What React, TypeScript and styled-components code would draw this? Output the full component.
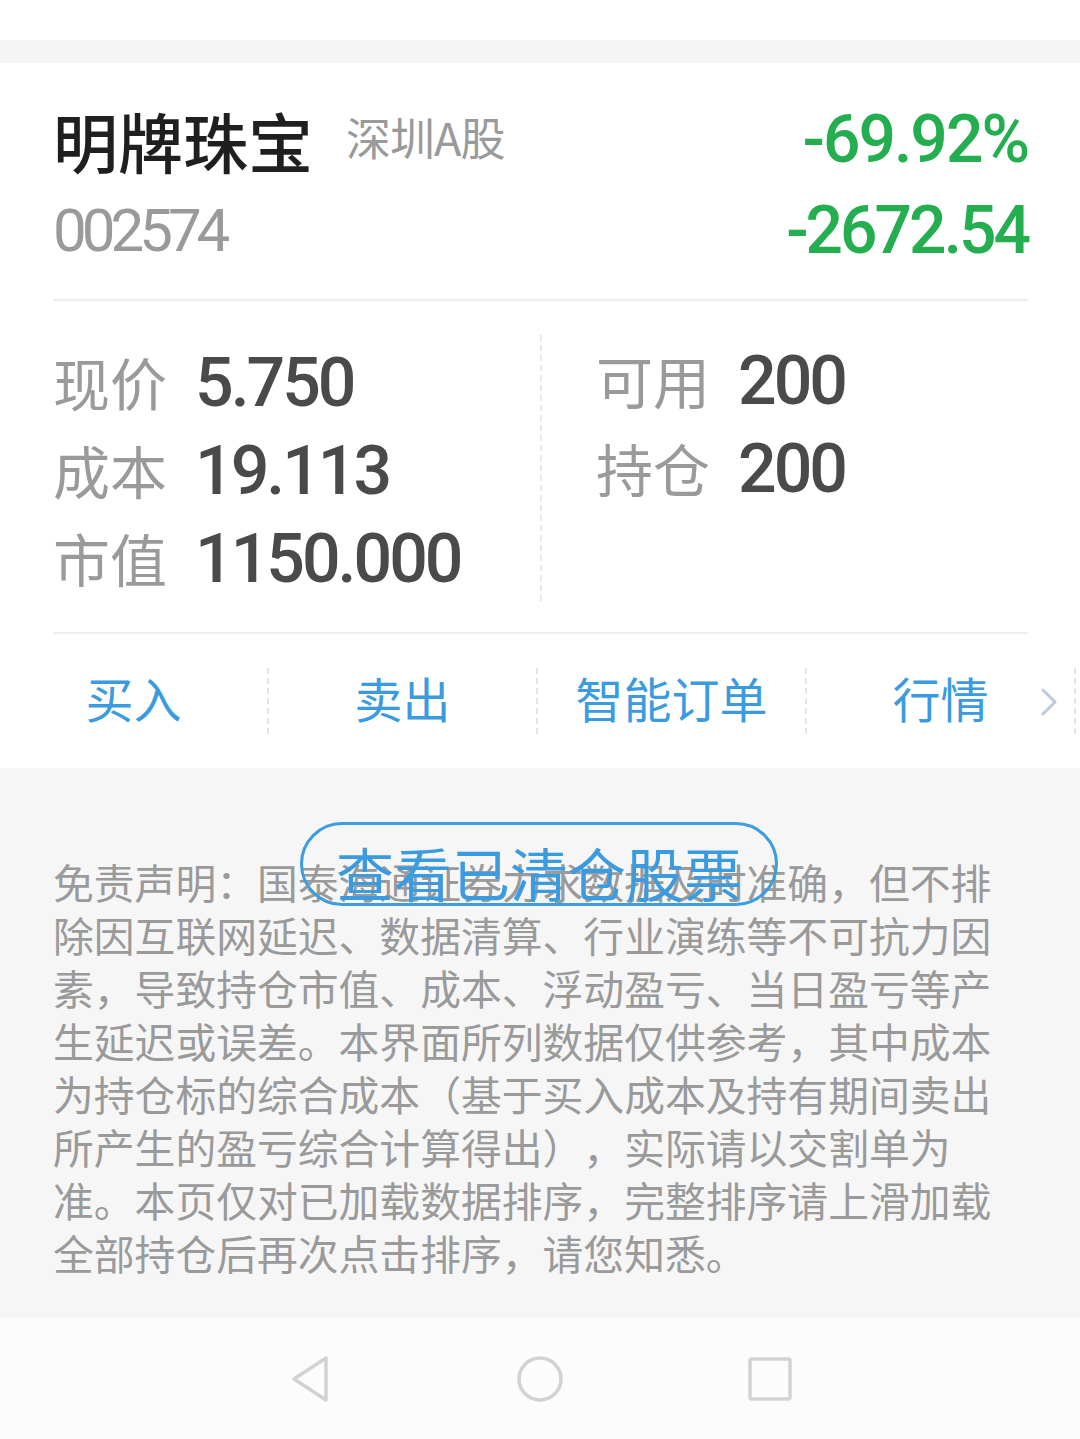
import styled, { createGlobalStyle } from "styled-components";

const GlobalStyle = createGlobalStyle`
  html, body {
    margin: 0;
    padding: 0;
    background: #ffffff;
  }
  body {
    font-family: "Noto Sans CJK SC", "Noto Sans", sans-serif;
  }
`;

const Page = styled.div`
  width: 1080px;
  height: 1439px;
  display: flex;
  flex-direction: column;
  background: #ffffff;
  overflow: hidden;

  & > * {
    flex-shrink: 0;
  }
`;

const TopStrip = styled.div`
  height: 40px;
  background: #ffffff;
`;

const Gap = styled.div`
  height: 23px;
  background: #f5f5f5;
`;

const Card = styled.div`
  background: #ffffff;
  display: flex;
  flex-direction: column;
`;

const Header = styled.div`
  margin: 0 52px 0 53px;
  padding: 33px 0 24px;
  border-bottom: 2px solid #eeeeee;
  display: flex;
  justify-content: space-between;
  align-items: flex-start;
`;

const Col = styled.div<{ $align?: "left" | "right" }>`
  display: flex;
  flex-direction: column;
  gap: 3px;
  align-items: ${(p) => (p.$align === "right" ? "flex-end" : "flex-start")};
`;

const NameRow = styled.div`
  display: flex;
  align-items: baseline;
  gap: 33px;
  height: 88px;
`;

const Name = styled.span`
  font-size: 65px;
  font-weight: 500;
  color: #1f1f1f;
  line-height: 88px;
`;

const Market = styled.span`
  font-size: 45px;
  color: #9a9a9a;
  position: relative;
  top: -12px;
  letter-spacing: -1px;
`;

const Num = styled.span<{ $size: number; $color: string; $spacing: number; $weight?: number }>`
  font-family: Roboto, "Liberation Sans", sans-serif;
  font-weight: ${(p) => p.$weight ?? 500};
  font-size: ${(p) => p.$size}px;
  color: ${(p) => p.$color};
  letter-spacing: ${(p) => p.$spacing}px;
  line-height: 88px;
  height: 88px;
`;

const Stats = styled.div`
  margin: 0 52px 0 53px;
  padding: 36px 0 31px;
  border-bottom: 2px solid #eeeeee;
  display: grid;
  grid-template-columns: 487px 1fr;
`;

const StatCol = styled.div<{ $divided?: boolean }>`
  display: flex;
  flex-direction: column;
  padding-left: ${(p) => (p.$divided ? "54px" : "0")};
  border-left: ${(p) => (p.$divided ? "2px dashed #e8e8e8" : "none")};
  margin-top: ${(p) => (p.$divided ? "-2px" : "0")};
`;

const StatRow = styled.div`
  display: flex;
  align-items: baseline;
  height: 88px;
  gap: 28px;
`;

const StatLabel = styled.span`
  font-size: 57px;
  color: #9a9a9a;
  line-height: 88px;
`;

const StatValue = styled.span`
  font-family: Roboto, "Liberation Sans", sans-serif;
  font-weight: 500;
  font-size: 68px;
  color: #4a4a4a;
  letter-spacing: -3px;
  line-height: 88px;
`;

const Actions = styled.div`
  display: flex;
  height: 134px;
  align-items: center;
  overflow: hidden;
`;

const ActionCell = styled.div`
  flex: 0 0 269px;
  height: 66px;
  box-sizing: border-box;
  padding-bottom: 8px;
  border-right: 2px dashed #e4e4e4;
  display: flex;
  align-items: center;
  justify-content: center;
  position: relative;
  font-size: 48px;
  color: #3a9be0;
`;

const Chevron = styled.svg`
  position: absolute;
  right: 16px;
  top: 20px;
`;

const Disclaimer = styled.div`
  height: 550px;
  box-sizing: border-box;
  background: #f6f6f6;
  position: relative;
  padding: 87px 53px 0;
`;

const DisclaimerText = styled.p`
  margin: 0;
  font-size: 40.8px;
  line-height: 53px;
  color: #9a9a9a;
  text-spacing-trim: space-all;
`;

const ClearedButton = styled.div`
  position: absolute;
  top: 54px;
  left: 300px;
  width: 472px;
  height: 78px;
  border: 3px solid #3d9de0;
  border-radius: 42px;
  display: flex;
  justify-content: center;
  font-size: 58px;
  line-height: 94px;
  color: #3a9be0;
  white-space: nowrap;
`;

const NavBar = styled.div`
  height: 121px;
  background: #fcfcfc;
  display: flex;
  justify-content: center;
  align-items: center;
`;

const NavSlot = styled.div`
  width: 230px;
  display: flex;
  justify-content: center;
`;

const stats = {
  left: [
    ["现价", "5.750"],
    ["成本", "19.113"],
    ["市值", "1150.000"],
  ],
  right: [
    ["可用", "200"],
    ["持仓", "200"],
  ],
};

const actions = ["买入", "卖出", "智能订单", "行情"];

export default function App() {
  return (
    <Page>
      <GlobalStyle />
      <TopStrip />
      <Gap />
      <Card>
        <Header>
          <Col>
            <NameRow>
              <Name>明牌珠宝</Name>
              <Market>深圳A股</Market>
            </NameRow>
            <Num $size={60} $color="#9a9a9a" $spacing={-5} $weight={400}>
              002574
            </Num>
          </Col>
          <Col $align="right">
            <Num $size={66} $color="#24ae50" $spacing={-2}>
              -69.92%
            </Num>
            <Num $size={66} $color="#24ae50" $spacing={-3}>
              -2672.54
            </Num>
          </Col>
        </Header>
        <Stats>
          <StatCol>
            {stats.left.map(([k, v]) => (
              <StatRow key={k}>
                <StatLabel>{k}</StatLabel>
                <StatValue>{v}</StatValue>
              </StatRow>
            ))}
          </StatCol>
          <StatCol $divided>
            {stats.right.map(([k, v]) => (
              <StatRow key={k}>
                <StatLabel>{k}</StatLabel>
                <StatValue>{v}</StatValue>
              </StatRow>
            ))}
          </StatCol>
        </Stats>
        <Actions>
          {actions.map((a, i) => (
            <ActionCell key={a}>
              {a}
              {i === actions.length - 1 && (
                <Chevron width="18" height="28" viewBox="0 0 18 28">
                  <path
                    d="M3 2 L15 14 L3 26"
                    fill="none"
                    stroke="#bccbd8"
                    strokeWidth="3"
                    strokeLinecap="round"
                    strokeLinejoin="round"
                  />
                </Chevron>
              )}
            </ActionCell>
          ))}
        </Actions>
      </Card>
      <Disclaimer>
        <DisclaimerText>
          免责声明：国泰海通证券力求数据及时准确，但不排除因互联网延迟、数据清算、行业演练等不可抗力因素，导致持仓市值、成本、浮动盈亏、当日盈亏等产生延迟或误差。本界面所列数据仅供参考，其中成本为持仓标的综合成本（基于买入成本及持有期间卖出所产生的盈亏综合计算得出），实际请以交割单为准。本页仅对已加载数据排序，完整排序请上滑加载全部持仓后再次点击排序，请您知悉。
        </DisclaimerText>
        <ClearedButton>查看已清仓股票</ClearedButton>
      </Disclaimer>
      <NavBar>
        <NavSlot>
          <svg width="44" height="50" viewBox="0 0 44 50">
            <path
              d="M38 4 L38 46 L6 25 Z"
              fill="none"
              stroke="#d2d2d2"
              strokeWidth="3.5"
              strokeLinejoin="round"
            />
          </svg>
        </NavSlot>
        <NavSlot>
          <svg width="48" height="48" viewBox="0 0 48 48">
            <circle cx="24" cy="24" r="21" fill="none" stroke="#d2d2d2" strokeWidth="3.5" />
          </svg>
        </NavSlot>
        <NavSlot>
          <svg width="46" height="46" viewBox="0 0 46 46">
            <rect x="3" y="3" width="40" height="40" rx="2" fill="none" stroke="#d2d2d2" strokeWidth="3.5" />
          </svg>
        </NavSlot>
      </NavBar>
    </Page>
  );
}
